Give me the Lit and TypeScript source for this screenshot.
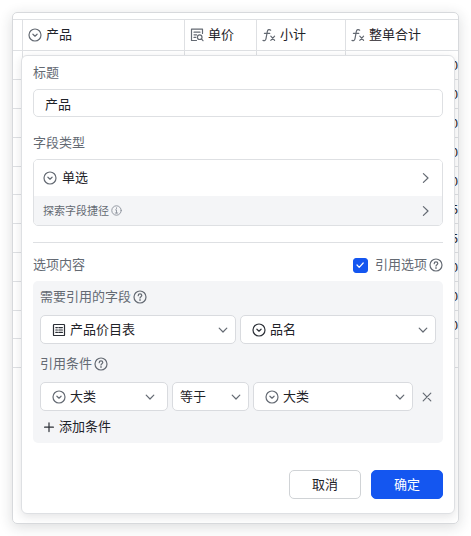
import { LitElement, html, svg, css } from "lit";
import { customElement, property, state } from "lit/decorators.js";

const glyphs: Record<string, unknown> = {
  single: svg`<circle cx="7" cy="7" r="6"/><path d="M4.9 6.2 7 8.2l2.1-2"/>`,
  help: svg`<circle cx="7" cy="7" r="6"/><path d="M5.2 5.7C5.2 4.5 6 3.9 7 3.9s1.8.6 1.8 1.6c0 1.2-1.8 1.3-1.8 2.6"/><path d="M7 9.5v.9"/>`,
  info: svg`<circle cx="7" cy="7" r="6"/><path d="M5.8 6.2H7v4M5.4 10.2h3.2M7 3.6v.8"/>`,
  lookup: svg`<path d="M12.5 5.5V1.2h-11v11.3h5"/><path d="M4 4.2h6M4 6.8h2.6M4 9.4h1.8"/><circle cx="9.7" cy="9.2" r="2.3"/><path d="m11.4 10.9 1.6 1.8"/>`,
  formula: svg`<path d="M8.7 2.2C7.4 1 5.7 1.5 5.3 3.6L4 10.6C3.7 12.4 2.4 13.1 1 12.4M2.4 5.3h5.4"/><path d="m8.8 8.2 3.8 4.2M12.6 8.2l-3.8 4.2"/>`,
  sheet: svg`<rect x="1.5" y="1.5" width="11" height="11" rx=".6"/><path d="M3.8 4.6h1.6M6.8 4.6h3.6M3.8 7h1.6M6.8 7h3.6M3.8 9.4h1.6M6.8 9.4h3.6"/>`,
  right: svg`<path d="m5.4 2.6 4.6 4.4-4.6 4.4"/>`,
  down: svg`<path d="M3.2 5.2 7 9l3.8-3.8"/>`,
  close: svg`<path d="m3.2 3.2 7.6 7.6M10.8 3.2l-7.6 7.6"/>`,
  plus: svg`<path d="M7 2.8v8.8M2.6 7.2h8.8"/>`,
  check: svg`<path d="m4 7 2.2 2.3L10.2 5"/>`,
};

@customElement("ui-icon")
class UiIcon extends LitElement {
  @property() name = "single";
  static styles = css`
    :host { display: block; flex: none; width: 14px; height: 14px; color: #646a73; }
    svg {
      display: block; width: 100%; height: 100%; fill: none; stroke: currentColor;
      stroke-width: 1.2; stroke-linecap: round; stroke-linejoin: round;
    }
  `;
  render() {
    return html`<svg viewBox="0 0 14 14" aria-hidden="true">${glyphs[this.name]}</svg>`;
  }
}

@customElement("ui-select")
class UiSelect extends LitElement {
  @property() icon = "";
  @property() value = "";
  @property() label = "";
  @property({ type: Boolean }) dark = false;
  @property({ type: Boolean }) inset = false;
  static styles = css`
    :host { display: block; min-width: 0; }
    .box { display: grid; grid-template-columns: 12px 1fr 20px; align-items: center; }
    .box.inset { grid-template-columns: 12px 1fr 25px; }
    select {
      grid-area: 1 / 1 / 2 / 4; appearance: none; box-sizing: border-box; width: 100%; height: 29px;
      margin: 0; padding: 0 20px 0 7px; border: 1px solid #d9dbdf; border-radius: 5px;
      background: #fff; color: #1f2329; font: inherit;
    }
    .with-icon select { padding-left: 29px; }
    .lead { grid-area: 1 / 2; z-index: 1; pointer-events: none; }
    .dark { color: #2b2f36; }
    .arrow { grid-area: 1 / 3; z-index: 1; pointer-events: none; }
  `;
  render() {
    return html`<div class="box ${this.icon ? "with-icon" : ""} ${this.inset ? "inset" : ""}">
      <select aria-label=${this.label}><option>${this.value}</option></select>
      ${this.icon ? html`<ui-icon class="lead ${this.dark ? "dark" : ""}" name=${this.icon}></ui-icon>` : ""}
      <ui-icon class="arrow" name="down"></ui-icon>
    </div>`;
  }
}

@customElement("app-root")
class AppRoot extends LitElement {
  @state() linked = true;

  private columns = [
    { icon: "single", title: "产品", cls: "c-product" },
    { icon: "lookup", title: "单价", cls: "c-price" },
    { icon: "formula", title: "小计", cls: "c-sub" },
    { icon: "formula", title: "整单合计", cls: "c-total" },
  ];
  private totals = ["0", "0", "0", "0", "0", "5", "5", "0", "0", "0", ""];

  static styles = css`
    :host {
      display: block; box-sizing: border-box; padding: 12px; background: #fff; color: #1f2329;
      font: 13px/20px "Liberation Sans", "Noto Sans CJK SC", sans-serif;
    }
    button, input { font: inherit; color: inherit; margin: 0; box-sizing: border-box; }
    button { cursor: pointer; }
    .frame {
      display: grid; border: 1px solid #d7d9dc; border-radius: 5px; overflow: hidden; background: #fff;
    }
    .shadow { border-radius: 5px; box-shadow: 0 3px 14px rgba(31, 35, 41, 0.16); }
    .sheet {
      grid-area: 1 / 1; align-self: start; width: 100%; margin-top: 6px; table-layout: fixed;
      border-collapse: separate; border-spacing: 0; border-top: 1px solid #dee0e3;
    }
    th, td { box-sizing: border-box; padding: 0; border-bottom: 1px solid #dee0e3; font-weight: 400; }
    th { height: 31px; }
    td { height: 29px; padding-top: 2px; text-align: right; }
    tr:nth-child(5n) td { height: 28px; }
    th:not(:last-child), td:not(:last-child) { border-right: 1px solid #dee0e3; }
    .c-index { width: 10px; }
    .c-product { width: 162px; }
    .c-price { width: 72px; }
    .c-sub { width: 89px; }
    .head { display: flex; align-items: center; gap: 4px; padding-left: 5px; white-space: nowrap; }
    .popover {
      grid-area: 1 / 1; z-index: 1; margin: 42px 3px 9px 8px; padding: 7px 11px 14px;
      border: 1px solid #dee0e3; border-radius: 6px; background: #fff;
      box-shadow: 0 3px 10px rgba(31, 35, 41, 0.12);
    }
    .label { display: flex; align-items: center; gap: 2px; color: #646a73; }
    .name {
      display: block; width: 100%; height: 28px; margin: 6px 0 16px; padding: 0 11px;
      border: 1px solid #dee0e3; border-radius: 5px; background: #fff;
    }
    .types { margin: 6px 0 16px; border: 1px solid #dee0e3; border-radius: 5px; overflow: hidden; }
    .type {
      display: flex; align-items: center; gap: 5px; width: 100%; height: 36px; padding: 0 10px 0 9px;
      border: 0; background: #fff;
    }
    .type .go { margin-left: auto; }
    .shortcut { height: 29px; background: #f4f5f7; color: #646a73; font-size: 11px; gap: 2px; }
    .shortcut .info { width: 11px; height: 11px; color: #8f959e; }
    .rule { height: 1px; margin: 0 0 12px; border: 0; background: #dee0e3; }
    .section { display: flex; justify-content: space-between; margin-bottom: 6px; color: #646a73; }
    .toggle { display: flex; align-items: center; gap: 7px; }
    .tick { display: grid; }
    .tick input {
      grid-area: 1 / 1; appearance: none; width: 15px; height: 15px; border: 1px solid #8f959e;
      border-radius: 3px; background: #fff;
    }
    .tick input:checked { border-color: #1456f0; background: #1456f0; }
    .tick ui-icon { grid-area: 1 / 1; color: #fff; pointer-events: none; }
    .linked { display: flex; align-items: center; gap: 2px; }
    .panel { padding: 6px 7px; border-radius: 5px; background: #f4f5f7; }
    .pair { display: grid; grid-template-columns: 1fr 1fr; gap: 4px; margin: 8px 0 10px; }
    .cond {
      display: grid; grid-template-columns: 128fr 77fr 160fr 19px; gap: 4px; align-items: center;
      margin: 8px 0 6px;
    }
    .icon-btn { display: grid; place-items: center; padding: 0; border: 0; background: none; height: 20px; }
    .add { display: flex; align-items: center; gap: 3px; padding: 0 0 0 2px; border: 0; background: none; }
    .add ui-icon { color: #2b2f36; }
    .actions { display: flex; justify-content: flex-end; gap: 10px; margin-top: 27px; }
    .btn {
      width: 72px; height: 29px; padding: 0; border: 1px solid #d0d3d6; border-radius: 5px; background: #fff;
    }
    .primary { border-color: #1456f0; background: #1456f0; color: #fff; }
  `;

  render() {
    return html`<div class="shadow"><main class="frame">
      <table class="sheet">
        <thead><tr>
          <th class="c-index"></th>
          ${this.columns.map((c) => html`<th class=${c.cls}>
            <div class="head"><ui-icon name=${c.icon}></ui-icon>${c.title}</div>
          </th>`)}
        </tr></thead>
        <tbody>
          ${this.totals.map((t) => html`<tr><td></td><td></td><td></td><td></td><td>${t}</td></tr>`)}
        </tbody>
      </table>
      <form class="popover" @submit=${(e: Event) => e.preventDefault()}>
        <label class="label" for="name">标题</label>
        <input class="name" id="name" type="text" value="产品">
        <div class="label">字段类型</div>
        <div class="types">
          <button class="type" type="button">
            <ui-icon name="single"></ui-icon>单选<ui-icon class="go" name="right"></ui-icon>
          </button>
          <button class="type shortcut" type="button">
            探索字段捷径<ui-icon class="info" name="info"></ui-icon><ui-icon class="go" name="right"></ui-icon>
          </button>
        </div>
        <hr class="rule">
        <div class="section">
          <span>选项内容</span>
          <div class="toggle">
            <span class="tick">
              <input id="linked" type="checkbox" .checked=${this.linked}
                @change=${(e: Event) => (this.linked = (e.target as HTMLInputElement).checked)}>
              <ui-icon name="check"></ui-icon>
            </span>
            <label class="linked" for="linked">引用选项<ui-icon name="help"></ui-icon></label>
          </div>
        </div>
        <div class="panel">
          <div class="label">需要引用的字段<ui-icon name="help"></ui-icon></div>
          <div class="pair">
            <ui-select icon="sheet" dark value="产品价目表" label="数据表"></ui-select>
            <ui-select icon="single" dark value="品名" label="字段"></ui-select>
          </div>
          <div class="label">引用条件<ui-icon name="help"></ui-icon></div>
          <div class="cond">
            <ui-select icon="single" inset value="大类" label="条件字段"></ui-select>
            <ui-select value="等于" label="运算符"></ui-select>
            <ui-select icon="single" value="大类" label="比较字段"></ui-select>
            <button class="icon-btn" type="button" aria-label="删除条件"><ui-icon name="close"></ui-icon></button>
          </div>
          <button class="add" type="button"><ui-icon name="plus"></ui-icon>添加条件</button>
        </div>
        <div class="actions">
          <button class="btn" type="button">取消</button>
          <button class="btn primary" type="submit">确定</button>
        </div>
      </form>
    </main></div>`;
  }
}
